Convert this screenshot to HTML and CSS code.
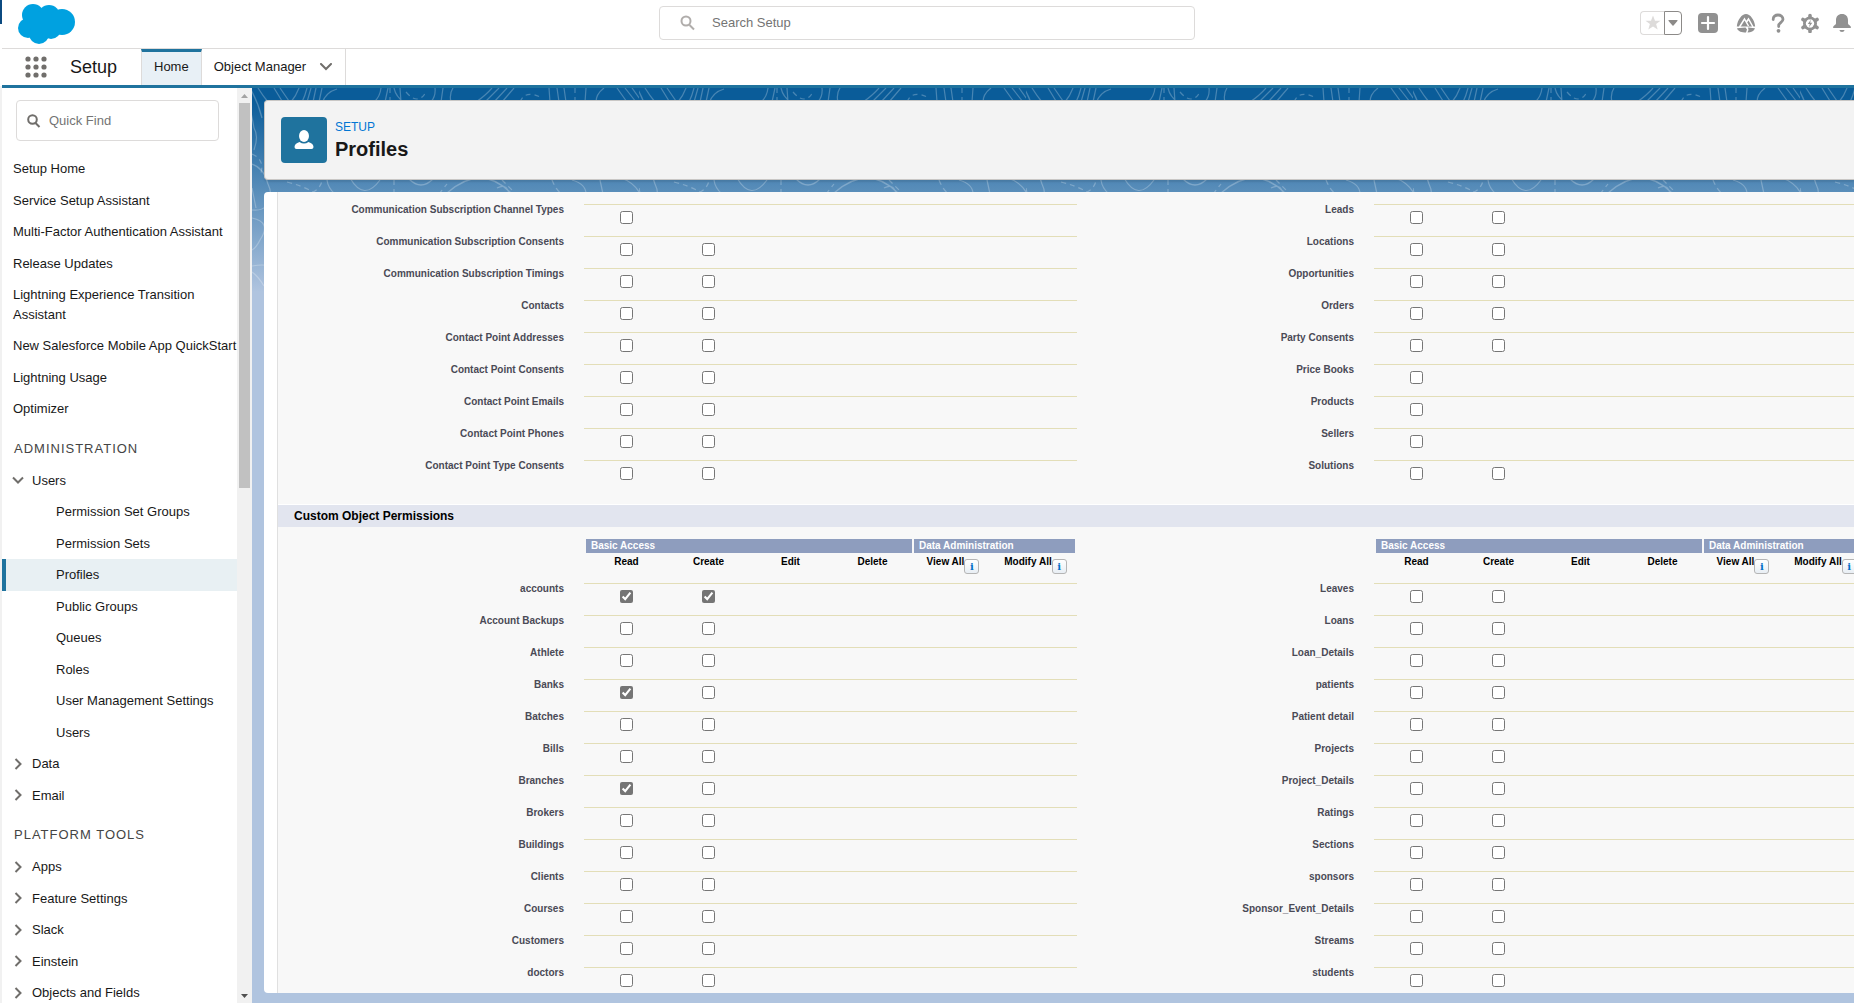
FILE: index.html
```html
<!DOCTYPE html>
<html lang="en">
<head>
<meta charset="utf-8">
<meta name="viewport" content="width=device-width, initial-scale=1">
<title>Profiles | Salesforce</title>
<link rel="stylesheet" href="styles.css">
</head>
<body>
<div class="edge"></div>
<div class="app">
  <header class="topbar">
    <a class="logo" href="#" aria-label="Salesforce home">
      <svg width="58" height="42" viewBox="0 0 58 42"><g fill="#00a1e0"><circle cx="16" cy="12" r="11"/><circle cx="32" cy="13" r="11"/><circle cx="45" cy="19" r="13"/><circle cx="11" cy="25" r="10"/><circle cx="22" cy="31" r="10"/><circle cx="34" cy="26" r="10"/><path d="M12 12h34v16H14z"/></g></svg>
    </a>
    <label class="search">
      <svg width="16" height="16" viewBox="0 0 16 16" fill="none" stroke="#b0adab" stroke-width="2"><circle cx="6" cy="6" r="4.5"/><path d="M9.5 10l4.5 4.500"/></svg>
      <input type="text" placeholder="Search Setup" aria-label="Search Setup">
    </label>
    <div class="tools">
      <div class="fav">
        <button class="fav-star" aria-label="Favorite"><svg width="16" height="16" viewBox="0 0 16 16"><path fill="#dddbda" d="M8 .5l2 5.200h5.500l-4.400 3.400 1.600 5.500L8 11.400l-4.700 3.200 1.600-5.500L.5 5.700H6z"/></svg></button>
        <button class="fav-list" aria-label="Favorites list"><svg width="10" height="6" viewBox="0 0 10 6"><path fill="#8c8a88" d="M1 0h8q1 0 .4.900L5.500 5.500q-.5.500-1 0L.6.900Q0 0 1 0z"/></svg></button>
      </div>
      <button class="tool" aria-label="Create"><svg width="20" height="20" viewBox="0 0 20 20"><rect width="20" height="20" rx="4" fill="#919191"/><path d="M10 4v12M4 10h12" stroke="#fff" stroke-width="2.200" stroke-linecap="round"/></svg></button>
      <button class="tool" aria-label="Guidance"><svg width="20" height="20" viewBox="0 0 20 20"><path fill="#919191" d="M10 1c4 0 8.500 5.500 9.200 12.500H.8C1.500 6.500 6 1 10 1zM1 15.200l8.500-.7 1.500 2-1 3C6 19.500 2 18.500 1 15.200zM12 14.500l7 .7c-1 3-4 4.100-7.500 4.300l1-2.500z"/><path d="M3.500 14L8.500 6l4 7M10.500 9l2-3 4.500 8" fill="none" stroke="#fff" stroke-width="1.500"/></svg></button>
      <button class="tool" aria-label="Help"><svg width="20" height="20" viewBox="0 0 20 20"><path d="M5.200 6.500C5 3.500 7.500 2 10 2s5 1.500 5 4.300c0 3-4.300 3.600-4.300 6.200v1" fill="none" stroke="#919191" stroke-width="2.800" stroke-linecap="round"/><circle cx="10.500" cy="17.800" r="1.900" fill="#919191"/></svg></button>
      <button class="tool" aria-label="Setup"><svg width="20" height="20" viewBox="0 0 20 20"><circle cx="10" cy="10.500" r="5.600" fill="none" stroke="#919191" stroke-width="2.800"/><path d="M10 2.600v2M10 16.500v2M3 6.500l1.800 1.100M15.200 13.400L17 14.500M17 6.500l-1.800 1.100M4.800 13.400L3 14.500" stroke="#919191" stroke-width="3.600" stroke-linecap="round"/><path fill="#919191" d="M10.800 6.800L7.800 11h2l-.8 3.200 3.300-4.500h-2.100z"/></svg></button>
      <button class="tool" aria-label="Notifications"><svg width="20" height="20" viewBox="0 0 20 20"><path fill="#919191" d="M10 1c3.800 0 6 2.600 6 6v3.500c0 1.500 3 2.200 3 3.800 0 .5-.3.700-.7.700H1.700c-.4 0-.7-.2-.7-.7 0-1.600 3-2.300 3-3.800V7c0-3.400 2.200-6 6-6zM7.500 17h5c0 1.200-1.200 2-2.500 2s-2.500-.8-2.500-2z"/></svg></button>
    </div>
  </header>

  <nav class="contextbar" aria-label="App">
    <button class="waffle" aria-label="App Launcher"><svg width="22" height="22" viewBox="0 0 22 22" fill="#706e6b"><circle cx="3" cy="3" r="2.600"/><circle cx="11" cy="3" r="2.600"/><circle cx="19" cy="3" r="2.600"/><circle cx="3" cy="11" r="2.600"/><circle cx="11" cy="11" r="2.600"/><circle cx="19" cy="11" r="2.600"/><circle cx="3" cy="19" r="2.600"/><circle cx="11" cy="19" r="2.600"/><circle cx="19" cy="19" r="2.600"/></svg></button>
    <span class="app-name">Setup</span>
    <a class="tab tab-active" href="#">Home</a>
    <a class="tab tab-menu" href="#">Object Manager
      <svg width="14" height="8" viewBox="0 0 14 8" fill="none" stroke="#706e6b" stroke-width="2" stroke-linecap="round"><path d="M2 1l5 5 5-5"/></svg></a>
  </nav>

  <div class="workspace">
    <aside class="sidebar">
      <div class="side-scroll">
        <label class="quickfind">
          <svg width="14" height="14" viewBox="0 0 14 14" fill="none" stroke="#706e6b" stroke-width="2"><circle cx="5.500" cy="5.500" r="4.300"/><path d="M8.500 9l4 4"/></svg>
          <input type="text" placeholder="Quick Find" aria-label="Quick Find">
        </label>
        <nav class="tree" aria-label="Setup">
          <a href="#">Setup Home</a>
          <a href="#">Service Setup Assistant</a>
          <a href="#">Multi-Factor Authentication Assistant</a>
          <a href="#">Release Updates</a>
          <a href="#">Lightning Experience Transition Assistant</a>
          <a class="nowrap" href="#">New Salesforce Mobile App QuickStart</a>
          <a href="#">Lightning Usage</a>
          <a href="#">Optimizer</a>
          <h2>ADMINISTRATION</h2>
          <a class="node" href="#"><svg class="chev" viewBox="0 0 10 10"><path d="M0 2.500l5 5 5-5"/></svg>Users</a>
          <a class="leaf" href="#">Permission Set Groups</a>
          <a class="leaf" href="#">Permission Sets</a>
          <a class="leaf leaf-active" href="#" aria-current="page">Profiles</a>
          <a class="leaf" href="#">Public Groups</a>
          <a class="leaf" href="#">Queues</a>
          <a class="leaf" href="#">Roles</a>
          <a class="leaf" href="#">User Management Settings</a>
          <a class="leaf" href="#">Users</a>
          <a class="node" href="#"><svg class="chev" viewBox="0 0 10 10"><path d="M2.500 0l5 5-5 5"/></svg>Data</a>
          <a class="node" href="#"><svg class="chev" viewBox="0 0 10 10"><path d="M2.500 0l5 5-5 5"/></svg>Email</a>
          <h2>PLATFORM TOOLS</h2>
          <a class="node" href="#"><svg class="chev" viewBox="0 0 10 10"><path d="M2.500 0l5 5-5 5"/></svg>Apps</a>
          <a class="node" href="#"><svg class="chev" viewBox="0 0 10 10"><path d="M2.500 0l5 5-5 5"/></svg>Feature Settings</a>
          <a class="node" href="#"><svg class="chev" viewBox="0 0 10 10"><path d="M2.500 0l5 5-5 5"/></svg>Slack</a>
          <a class="node" href="#"><svg class="chev" viewBox="0 0 10 10"><path d="M2.500 0l5 5-5 5"/></svg>Einstein</a>
          <a class="node" href="#"><svg class="chev" viewBox="0 0 10 10"><path d="M2.500 0l5 5-5 5"/></svg>Objects and Fields</a>
        </nav>
      </div>
      <div class="scrollbar" aria-hidden="true">
        <svg width="15" height="15" viewBox="0 0 15 15"><path fill="#a3a3a3" d="M4 10l3.500-4 3.500 4z"/></svg>
        <div class="track"><div class="thumb"></div></div>
        <svg width="15" height="15" viewBox="0 0 15 15"><path fill="#505050" d="M4 6l3.500 4L11 6z"/></svg>
      </div>
    </aside>

    <main class="stage">
      <svg class="contours" width="100%" height="210" aria-hidden="true">
        <defs>
          <pattern id="topo" width="387" height="210" patternUnits="userSpaceOnUse">
            <g fill="none" stroke="#fff" stroke-opacity=".25" stroke-width="1.200">
              <path d="M-12 0q10 14 14 40q5 8 0 22M-2 0q8 14 12 30M6 0q5 8 10 14M22 0l8 13M28 0l9 13M47 0q-3 8-8 14M55 0q-2 8-5 14M59 0l-4 14M64 0l-3 14M70 0l-3 14M85 1q-11 3-15 14M129 0q-1 9-7 14M136 0l-3 14M148 0l1 14M142 0q2 9 10 14M183 0q1 8-4 14M191 0l-2 14M201 0q-4 6-2 14M240 0q-6 7-16 14M247 0l-14 14M255 0l-13 14M262 0l-12 14M297 0l1 14M305 0l2 14M312 0l2 14M334 0l-1 14M352 0q-8 6-8 14M365 0l10 14M373 0l11 14M380 0l10 14"/>
              <path stroke-dasharray="5 4" d="M138 0v14M154 4q12 14 20 0M268 14q5-13 22-4M323 0v14M0 66q14 6 8 22M300 92q4 10 10 14M35 94q16 4 26 10q8-4 9-12M142 92v12M187 106l8-10M250 92l12 12"/>
              <path d="M0 76q12 4 16 20q6 12-2 22q-4 5-14 4M75 92q1 8 8 14M98 90q14 24 30 2M157 91q12 12 24 0M195 105q34-30 64 0M245 100q10-5 12 6M320 92q14 4 14 14M348 92l3 14M369 90q12 4 18 14M0 130q20 4 8 22q-4 8-8 10M0 178q12-2 16 0M0 184q6 4 12 14M0 100l4 20"/>
            </g>
          </pattern>
        </defs>
        <rect width="100%" height="210" fill="url(#topo)"/>
      </svg>

      <header class="page-head">
        <span class="page-icon"><svg width="22" height="22" viewBox="0 0 22 22" fill="#fff"><ellipse cx="11" cy="7" rx="5" ry="6"/><path d="M6.500 13q4.500 3 9 0 5 1.500 5 5 0 2-2 2h-15q-2 0-2-2 0-3.500 5-5z"/></svg></span>
        <div class="page-title">
          <p class="eyebrow">SETUP</p>
          <h1>Profiles</h1>
        </div>
      </header>

      <section class="panel">
        <div class="detail">
          <div class="pair">
            <table class="perms" data-list="standardLeft"></table>
            <table class="perms" data-list="standardRight"></table>
          </div>
          <h2 class="band">Custom Object Permissions</h2>
          <div class="pair">
            <table class="perms" data-head data-list="customLeft"></table>
            <table class="perms" data-head data-list="customRight"></table>
          </div>
        </div>
      </section>
    </main>
  </div>
</div>
<script src="script.js"></script>
</body>
</html>
```
FILE: styles.css
```css
* { box-sizing: border-box; }

body {
  margin: 0;
  height: 100vh;
  display: flex;
  overflow: hidden;
  font-family: "Liberation Sans", Arial, sans-serif;
  font-size: 13px;
  line-height: 1.5;
  color: #181818;
  background: #fff;
}

a { color: inherit; text-decoration: none; }
h1, h2, p { margin: 0; }
svg { display: block; flex: none; }
button { padding: 0; border: 0; background: none; font: inherit; }
input[type="text"] {
  flex: 1;
  min-width: 0;
  padding: 0;
  border: 0;
  outline: 0;
  background: none;
  font: inherit;
  color: inherit;
}
input::placeholder { color: #747474; opacity: 1; }

.edge {
  flex: 0 0 2px;
  background: linear-gradient(#0b4a80 24px, #fff 24px, #fff 86px, #f1f1f1 86px);
}
.app { flex: 1; min-width: 0; display: flex; flex-direction: column; }

/* Global header */
.topbar {
  display: grid;
  grid-template-columns: 1fr 536px 1fr;
  align-items: center;
  height: 49px;
  padding-right: 2px;
  border-bottom: 1px solid #dddbda;
}
.logo { padding-left: 15px; }
.search {
  display: flex;
  align-items: center;
  gap: 16px;
  height: 34px;
  padding: 0 20px;
  border: 1px solid #dddbda;
  border-radius: 4px;
  margin-bottom: 2px;
}
.tools { display: flex; justify-content: flex-end; align-items: center; gap: 12px; margin-bottom: 2px; }
.fav { display: flex; height: 24px; margin-right: 4px; }
.fav button { display: grid; place-items: center; }
.fav-star { width: 24px; border: 1px solid #dddbda; border-right: 0; border-radius: 4px 0 0 4px; }
.fav-list { width: 18px; border: 1px solid #8c8a88; border-radius: 0 4px 4px 0; }
.tool:nth-child(2) { margin-right: 6px; }

/* App navigation */
.contextbar {
  display: flex;
  align-items: stretch;
  height: 39px;
  border-bottom: 3px solid #1f739e;
}
.waffle { width: 22px; margin-left: 23px; }
.app-name { width: 71px; margin-left: 23px; font-size: 18px; line-height: 36px; }
.tab { display: flex; align-items: center; line-height: 36px; }
.tab-active {
  padding: 0 12px 3px;
  border: solid #dddbda;
  border-width: 3px 1px 0;
  border-top-color: #1f739e;
  background: #e8f0f6;
  line-height: 30px;
}
.tab-menu { gap: 13px; padding: 0 12px; border-right: 1px solid #dddbda; }

.workspace { flex: 1; min-height: 0; display: flex; }

/* Setup tree */
.sidebar { flex: 0 0 250px; min-width: 0; display: flex; background: #fff; }
.side-scroll { flex: 1; min-width: 0; overflow: hidden; }
.quickfind {
  display: flex;
  align-items: center;
  gap: 8px;
  height: 41px;
  margin: 12px 18px 12px 14px;
  padding: 0 10px;
  border: 1px solid #dddbda;
  border-radius: 4px;
}
.tree a { display: flex; align-items: center; padding: 6px 11px; }
.tree .nowrap { white-space: nowrap; padding-right: 0; }
.tree .node { gap: 9px; }
.tree .leaf { padding-left: 54px; }
.tree .leaf-active { padding-left: 50px; border-left: 4px solid #1f739e; background: #e8f0f3; }
.tree h2 {
  padding: 13px 12px 6px;
  font-size: 13px;
  font-weight: 400;
  line-height: 21px;
  letter-spacing: 1px;
  color: #444;
}
.chev { width: 10px; height: 10px; fill: none; stroke: #706e6b; stroke-width: 2; overflow: visible; }

.scrollbar { flex: 0 0 15px; display: flex; flex-direction: column; background: #f1f1f1; }
.track { flex: 1; }
.thumb { height: calc(44% - 4px); margin: 0 2px; background: #c1c1c1; }

/* Page */
.stage {
  position: relative;
  flex: 1;
  min-width: 0;
  display: flex;
  flex-direction: column;
  gap: 12px;
  padding: 12px 0 10px 12px;
  overflow: hidden;
  background: linear-gradient(#0a5c99 0, #0a5c99 12px, #5a8eba 104px, #b0c4df 204px);
}
.contours { position: absolute; inset: 0 0 auto 0; }
.page-head, .panel { position: relative; border-radius: 4px 0 0 4px; }
.page-head {
  display: flex;
  align-items: center;
  gap: 8px;
  height: 80px;
  padding: 0 16px;
  border: 1px solid #c9c7c5;
  border-right: 0;
  background: #f3f3f3;
  box-shadow: 0 2px 2px rgba(0, 0, 0, .1);
}
.page-icon { display: grid; place-items: center; width: 46px; height: 46px; border-radius: 4px; background: #1f739e; }
.page-title { padding-bottom: 2px; }
.eyebrow { font-size: 12px; line-height: 20px; color: #0176d3; }
h1 { font-size: 20px; line-height: 24px; }

.panel { flex: 1; min-height: 0; padding-left: 13px; overflow: hidden; background: #fff; }
.detail { min-height: 100%; border-left: 1px solid #e0e0e0; background: #f8f8f8; }
.pair {
  display: grid;
  grid-template-columns: minmax(799px, 1fr) 790px;
  align-items: start;
  padding: 12px 0;
}
.band {
  height: 23px;
  padding-left: 16px;
  border-top: 1px solid #fff;
  background: #e2e5ef;
  font-size: 12px;
  line-height: 22px;
  color: #000;
}

.perms { width: 100%; table-layout: fixed; border-spacing: 0; font-size: 10px; line-height: 12px; }
.perms .col { width: 82px; }
.perms .col-last { width: 83px; }
.perms th, .perms td { padding: 0; vertical-align: top; }
.perms tbody tr { height: 32px; }
.perms tbody th { padding: 0 20px 0 0; text-align: right; color: #4a4a56; }
.perms td { border-top: 1px solid #e3deb8; }
.perms td:nth-child(2), .perms td:nth-child(3) { padding-left: 3px; }
.perms td input { display: block; width: 13px; height: 13px; margin: 6px auto 0; accent-color: #757575; }

.groups th { height: 14px; text-align: left; color: #fff; }
.groups span { display: block; height: 14px; padding-left: 5px; line-height: 14px; background: #8e9dbe; }
.groups .basic { margin-left: 2px; }
.groups .admin { margin: 0 2px; }
.heads th { height: 30px; padding-top: 3px; color: #000; text-align: center; }
.heads .plain { padding-left: 3px; }
.heads div { display: flex; justify-content: center; }
.info {
  width: 15px;
  height: 15px;
  margin-top: 3px;
  border: 1px solid #b5b5b5;
  border-radius: 3px;
  background: linear-gradient(#fff, #e8eef4);
  font: bold 10px/12px "DejaVu Serif", serif;
  color: #0070c8;
}
```
FILE: script.js
```js
// Each entry is [object name, which of Read / Create are offered, which are ticked].
const lists = {
  standardLeft: [
    ["Communication Subscription Channel Types", "R"],
    ["Communication Subscription Consents", "RC"],
    ["Communication Subscription Timings", "RC"],
    ["Contacts", "RC"],
    ["Contact Point Addresses", "RC"],
    ["Contact Point Consents", "RC"],
    ["Contact Point Emails", "RC"],
    ["Contact Point Phones", "RC"],
    ["Contact Point Type Consents", "RC"],
  ],
  standardRight: [
    ["Leads", "RC"], ["Locations", "RC"], ["Opportunities", "RC"], ["Orders", "RC"],
    ["Party Consents", "RC"], ["Price Books", "R"], ["Products", "R"], ["Sellers", "R"],
    ["Solutions", "RC"],
  ],
  customLeft: [
    ["accounts", "RC", "RC"], ["Account Backups", "RC"], ["Athlete", "RC"],
    ["Banks", "RC", "R"], ["Batches", "RC"], ["Bills", "RC"], ["Branches", "RC", "R"],
    ["Brokers", "RC"], ["Buildings", "RC"], ["Clients", "RC"], ["Courses", "RC"],
    ["Customers", "RC"], ["doctors", "RC"],
  ],
  customRight: [
    ["Leaves", "RC"], ["Loans", "RC"], ["Loan_Details", "RC"], ["patients", "RC"],
    ["Patient detail", "RC"], ["Projects", "RC"], ["Project_Details", "RC"],
    ["Ratings", "RC"], ["Sections", "RC"], ["sponsors", "RC"],
    ["Sponsor_Event_Details", "RC"], ["Streams", "RC"], ["students", "RC"],
  ],
};

const columns = '<colgroup><col>' + '<col class="col">'.repeat(5) + '<col class="col-last"></colgroup>';

const head = `<thead>
  <tr class="groups"><th></th><th colspan="4"><span class="basic">Basic Access</span></th>
    <th colspan="2"><span class="admin">Data Administration</span></th></tr>
  <tr class="heads"><th></th>
    ${["Read", "Create", "Edit", "Delete"].map((t) => `<th class="plain">${t}</th>`).join("")}
    ${["View All", "Modify All"].map((t) => `<th><div>${t}<button class="info" aria-label="${t} help">i</button></div></th>`).join("")}
  </tr></thead>`;

function cell(name, key, offered, ticked) {
  if (!offered.includes(key)) return "<td></td>";
  const action = key === "R" ? "Read" : "Create";
  const state = ticked.includes(key) ? " checked" : "";
  return `<td><input type="checkbox" aria-label="${action} ${name}"${state}></td>`;
}

for (const table of document.querySelectorAll(".perms")) {
  const rows = lists[table.dataset.list].map(([name, offered, ticked = ""]) =>
    `<tr><th scope="row">${name}</th>${cell(name, "R", offered, ticked)}${cell(name, "C", offered, ticked)}<td></td><td></td><td></td><td></td></tr>`);
  table.innerHTML = columns + ("head" in table.dataset ? head : "") + `<tbody>${rows.join("")}</tbody>`;
}
```
